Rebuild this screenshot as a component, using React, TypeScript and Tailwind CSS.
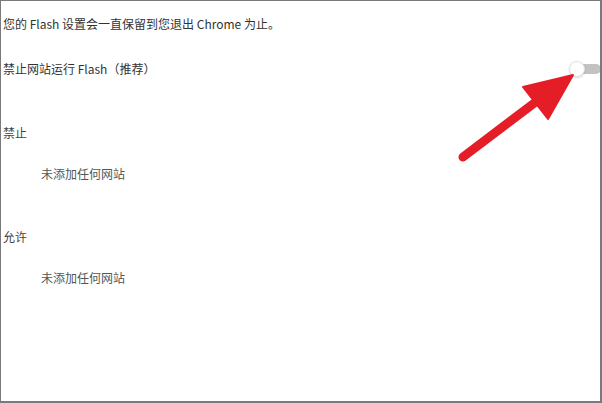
import React from "react";

const FONT = { fontFamily: '"Microsoft YaHei", "Noto Sans CJK SC", "Liberation Sans", sans-serif' };

function Arrow() {
  return (
    <svg className="absolute left-0 top-0 pointer-events-none" width="602" height="403" viewBox="0 0 602 403">
      <line x1="462" y1="156" x2="536" y2="100" stroke="#e51d27" strokeWidth="9" strokeLinecap="round" />
      <polygon points="572,74 522,86 547,118" fill="#e51d27" stroke="#e51d27" strokeWidth="2" strokeLinejoin="round" />
    </svg>
  );
}

export default function App() {
  return (
    <div
      className="relative w-[602px] h-[403px] bg-white border-t border-l border-b-2 border-r-2 border-[#7a7a7a] overflow-hidden text-[12px] text-[#333]"
      style={FONT}
    >
      <div className="pl-[2px] pt-[13px] leading-[20px]">
        <p>您的 Flash 设置会一直保留到您退出 Chrome 为止。</p>

        <div className="mt-[25px] flex items-center justify-between">
          <span>禁止网站运行 Flash（推荐）</span>
          <div className="relative w-[30px] h-[20px] mr-[1px] flex items-center">
            <div className="absolute left-[8px] w-[24px] h-[10px] rounded-full bg-[#c2c2c2]" />
            <div className="relative w-[16px] h-[16px] rounded-full bg-white border border-[#e3e3e3] shadow-[0_1px_2px_rgba(0,0,0,0.15)]" />
          </div>
        </div>

        <p className="mt-[44px] text-[#444]">禁止</p>
        <p className="mt-[21px] pl-[38px] text-[#555]">未添加任何网站</p>

        <p className="mt-[43px] text-[#444]">允许</p>
        <p className="mt-[21px] pl-[38px] text-[#555]">未添加任何网站</p>
      </div>
      <Arrow />
    </div>
  );
}
